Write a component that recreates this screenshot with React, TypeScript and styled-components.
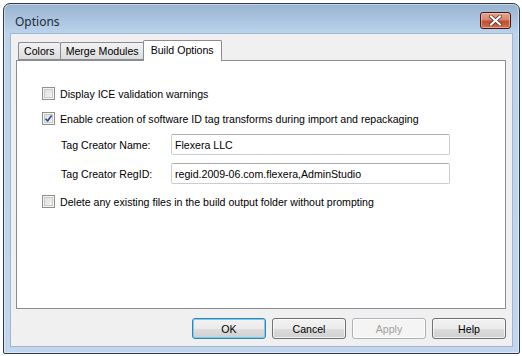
import styled, { createGlobalStyle } from "styled-components";

const GlobalStyle = createGlobalStyle`
  body {
    margin: 0;
    background: #ffffff;
    font-family: "Liberation Sans", Arial, sans-serif;
  }
`;

const Window = styled.div`
  margin: 3px 0 0 3px;
  width: 517px;
  height: 351px;
  box-sizing: border-box;
  border: 1px solid #2e3a48;
  border-radius: 7px 7px 2px 2px;
  background: linear-gradient(#98b3cf 0px, #a9c3de 14px, #bcd3eb 30px, #c2d7ee 100%);
  display: flex;
  flex-direction: column;
  padding: 0 6px 6px 6px;
  box-shadow: inset 0 0 0 1px rgba(255, 255, 255, 0.45);
`;

const TitleBar = styled.div`
  height: 29px;
  display: flex;
  align-items: center;
  justify-content: space-between;
  padding: 0 2px 0 5px;
`;

const Title = styled.span`
  font-family: "Noto Sans", "Open Sans", sans-serif;
  font-size: 12px;
  color: #1e2a36;
  margin-top: 6px;
`;

const CloseButton = styled.div`
  width: 31px;
  height: 17px;
  box-sizing: border-box;
  border: 1px solid #3e1a1e;
  border-radius: 3px;
  margin-top: 4px;
  background: linear-gradient(#e4a48c 0%, #d8866a 45%, #c14e2c 55%, #d17050 100%);
  display: flex;
  align-items: center;
  justify-content: center;
  box-shadow: inset 0 0 0 1px rgba(255, 210, 190, 0.55);
`;

const Client = styled.div`
  flex: 1;
  background: #f0f0f0;
  border: 1px solid #9fb6cf;
  display: flex;
  flex-direction: column;
  padding: 6px 6px 0 5px;
`;

const TabStrip = styled.div`
  display: flex;
  align-items: flex-end;
  height: 20px;
  padding-left: 2px;
  position: relative;
  z-index: 1;
`;

const Tab = styled.div<{ $active?: boolean }>`
  box-sizing: border-box;
  height: ${(p) => (p.$active ? "21px" : "18px")};
  margin-bottom: ${(p) => (p.$active ? "-1px" : "0")};
  margin-left: ${(p) => (p.$active ? "-1px" : "0")};
  padding: ${(p) => (p.$active ? "0 7px 3px 7px" : "0 5px")};
  border: 1px solid #898c95;
  border-bottom: ${(p) => (p.$active ? "none" : "1px solid #898c95")};
  border-right: ${(p) => (p.$active ? "1px solid #898c95" : "none")};
  background: ${(p) =>
    p.$active ? "#ffffff" : "linear-gradient(#f2f2f2, #e8e8e8 50%, #dcdcdc)"};
  font-size: 10.6px;
  color: #000;
  display: flex;
  align-items: center;
  border-radius: 2px 2px 0 0;
  &:nth-child(2) {
    border-right: none;
  }
`;

const Panel = styled.div`
  height: 249px;
  box-sizing: border-box;
  background: #ffffff;
  border: 1px solid #898c95;
  display: flex;
  flex-direction: column;
  padding: 26px 0 0 25px;
`;

const CheckRow = styled.label<{ $gap?: number }>`
  display: flex;
  align-items: center;
  height: 13px;
  margin-bottom: ${(p) => p.$gap ?? 0}px;
  font-size: 10.6px;
  color: #000;
`;

const Box = styled.span`
  width: 13px;
  height: 13px;
  box-sizing: border-box;
  border: 1px solid #8f8f8f;
  background: linear-gradient(135deg, #dcdcdc, #f6f6f6);
  box-shadow: inset 0 0 0 1px #f4f4f4, inset 0 0 0 2px #c9c9c9;
  margin-right: 5px;
  display: flex;
  align-items: center;
  justify-content: center;
`;

const FieldRow = styled.div<{ $gap?: number }>`
  display: flex;
  align-items: center;
  padding-left: 19px;
  margin-bottom: ${(p) => p.$gap ?? 0}px;
`;

const FieldLabel = styled.span`
  width: 110px;
  font-size: 10.6px;
  color: #000;
`;

const Input = styled.div`
  width: 279px;
  height: 21px;
  box-sizing: border-box;
  border: 1px solid #c9cdd3;
  border-top-color: #abadb3;
  border-radius: 2px;
  background: #fff;
  font-size: 10.6px;
  color: #000;
  display: flex;
  align-items: center;
  padding-left: 3px;
`;

const ButtonRow = styled.div`
  display: flex;
  justify-content: flex-end;
  gap: 6px;
  margin-top: 9px;
`;

const Button = styled.div<{ $default?: boolean; $disabled?: boolean }>`
  width: 74px;
  height: 21px;
  box-sizing: border-box;
  border: 1px solid
    ${(p) => (p.$default ? "#3c7fb1" : p.$disabled ? "#adb2b5" : "#707070")};
  border-radius: 3px;
  background: ${(p) =>
    p.$disabled
      ? "#f4f4f4"
      : "linear-gradient(#f2f2f2 0%, #ebebeb 50%, #dddddd 51%, #cfcfcf 100%)"};
  box-shadow: inset 0 0 0 1px
    ${(p) => (p.$default ? "#6fd2f2" : "rgba(255, 255, 255, 0.7)")};
  font-size: 10.6px;
  color: ${(p) => (p.$disabled ? "#a0a0a0" : "#000")};
  display: flex;
  align-items: center;
  justify-content: center;
`;

const CheckMark = () => (
  <svg width="9" height="9" viewBox="0 0 9 9">
    <path
      d="M1.5 4.8 L3.6 7 L7.6 1.6"
      fill="none"
      stroke="#2a4a9e"
      strokeWidth="1.6"
      strokeLinejoin="round"
    />
  </svg>
);

const CloseGlyph = () => (
  <svg width="13" height="11" viewBox="0 0 13 11">
    <path
      d="M2 1.5 L11 9.5 M11 1.5 L2 9.5"
      stroke="#4a2a2a"
      strokeWidth="3.6"
      strokeLinecap="square"
    />
    <path
      d="M2 1.5 L11 9.5 M11 1.5 L2 9.5"
      stroke="#ffffff"
      strokeWidth="2.2"
      strokeLinecap="square"
    />
  </svg>
);

export default function App() {
  return (
    <>
      <GlobalStyle />
      <Window>
        <TitleBar>
          <Title>Options</Title>
          <CloseButton>
            <CloseGlyph />
          </CloseButton>
        </TitleBar>
        <Client>
          <TabStrip>
            <Tab>Colors</Tab>
            <Tab>Merge Modules</Tab>
            <Tab $active>Build Options</Tab>
          </TabStrip>
          <Panel>
            <CheckRow $gap={12}>
              <Box />
              Display ICE validation warnings
            </CheckRow>
            <CheckRow $gap={9}>
              <Box>
                <CheckMark />
              </Box>
              Enable creation of software ID tag transforms during import and
              repackaging
            </CheckRow>
            <FieldRow $gap={8}>
              <FieldLabel>Tag Creator Name:</FieldLabel>
              <Input>Flexera LLC</Input>
            </FieldRow>
            <FieldRow $gap={11}>
              <FieldLabel>Tag Creator RegID:</FieldLabel>
              <Input>regid.2009-06.com.flexera,AdminStudio</Input>
            </FieldRow>
            <CheckRow>
              <Box />
              Delete any existing files in the build output folder without
              prompting
            </CheckRow>
          </Panel>
          <ButtonRow>
            <Button $default>OK</Button>
            <Button>Cancel</Button>
            <Button $disabled>Apply</Button>
            <Button>Help</Button>
          </ButtonRow>
        </Client>
      </Window>
    </>
  );
}
